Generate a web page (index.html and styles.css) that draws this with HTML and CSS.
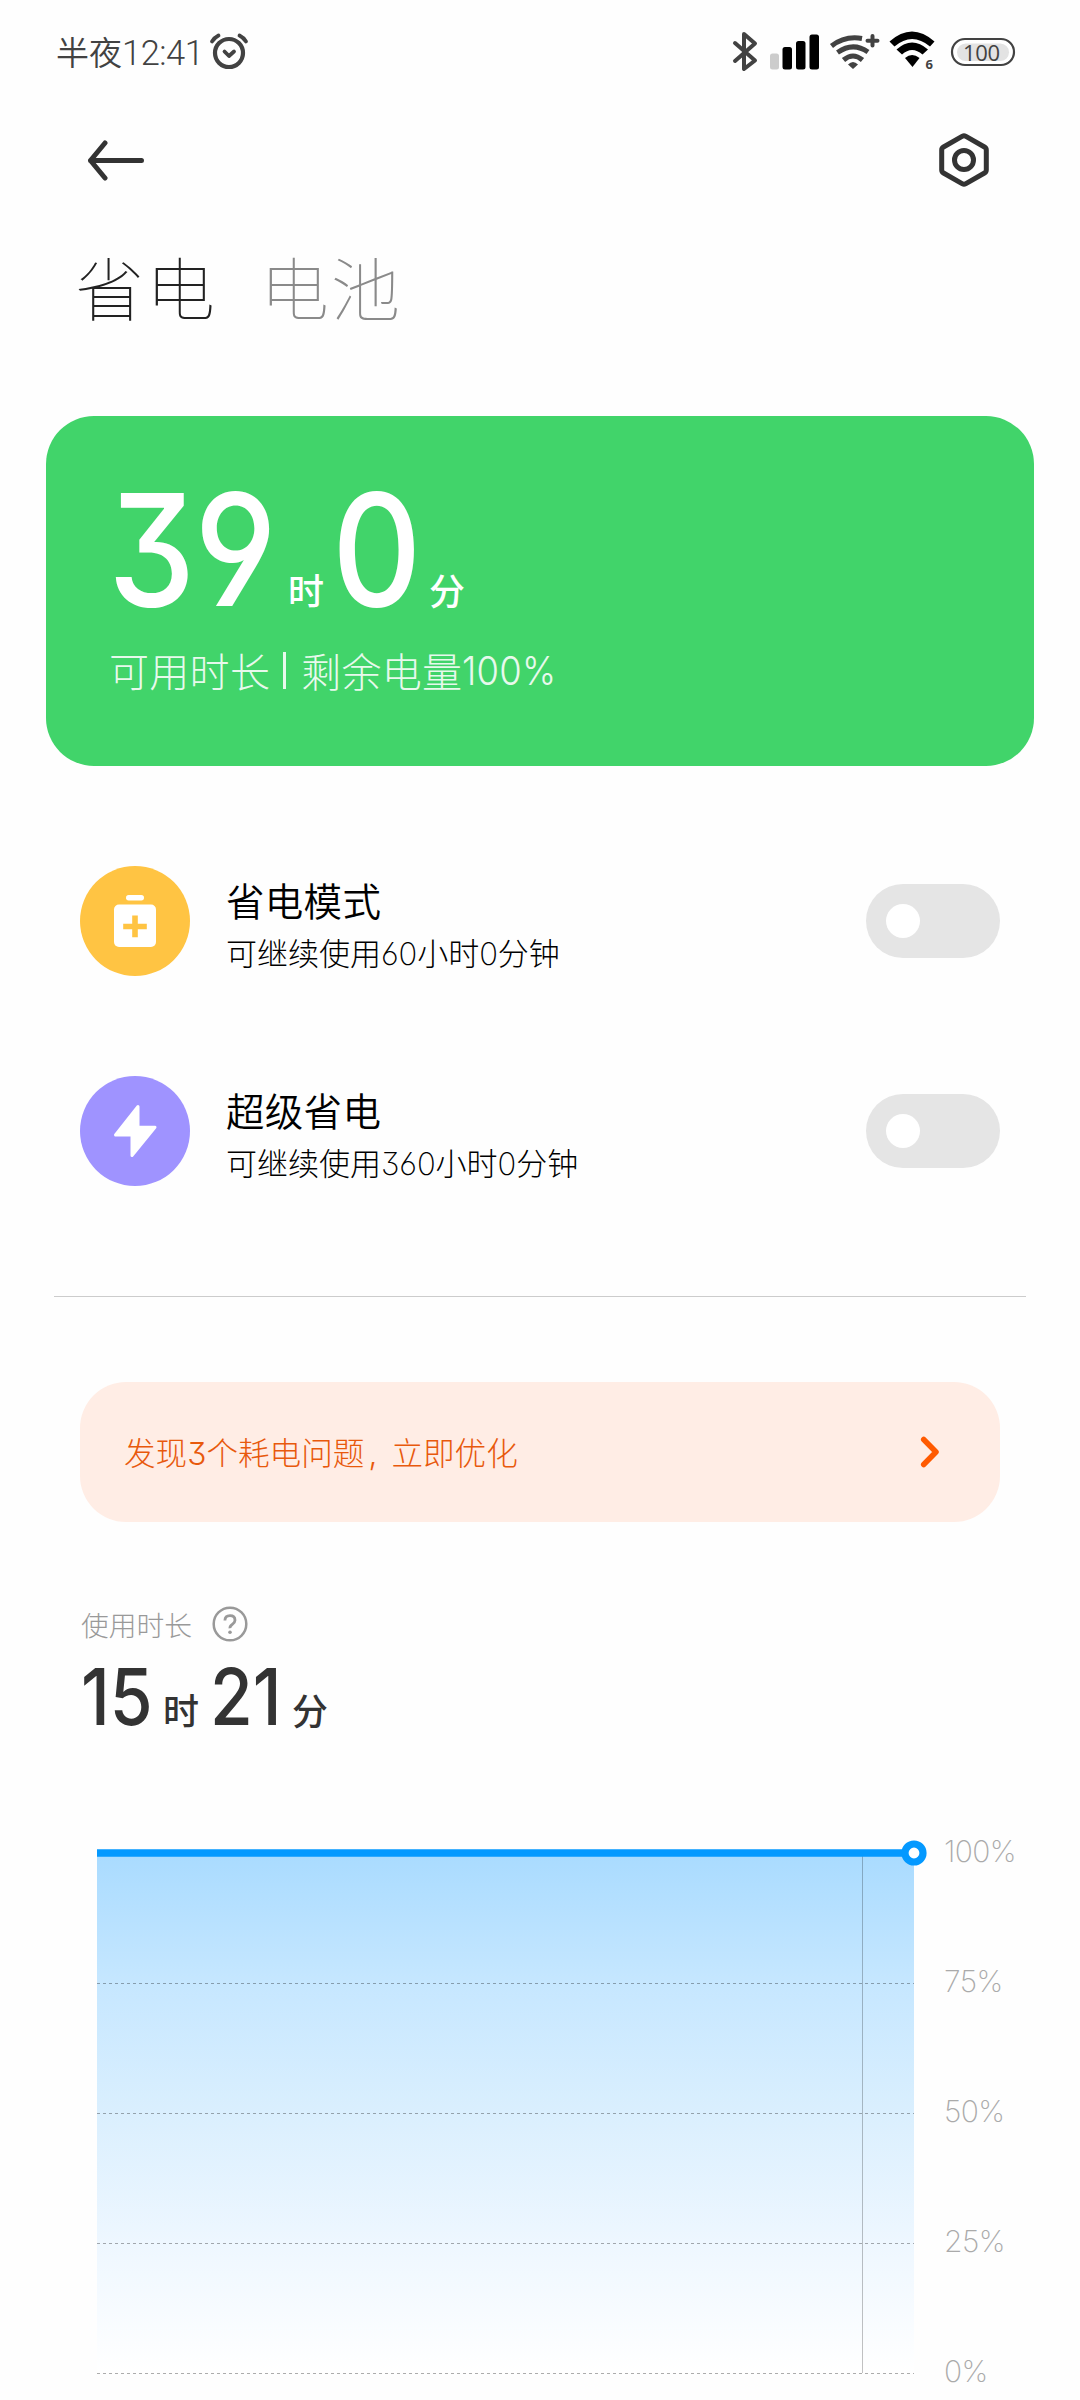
FILE: index.html
```html
<!DOCTYPE html>
<html lang="zh-CN">
<head>
<meta charset="utf-8">
<title>省电与电池</title>
<link rel="stylesheet" href="styles.css">
</head>
<body>
<header class="status">
  <div class="clock"><span class="clock-cn">半夜</span><span class="clock-num">12:41</span></div>
  <svg class="alarm" width="40" height="40" viewBox="0 0 40 40" fill="none" stroke="#424242" stroke-linecap="round" stroke-linejoin="round">
    <circle cx="20" cy="21" r="14" stroke-width="4.200"/>
    <path d="M15.500 19.500 20 24l5-4.500" stroke-width="3.800"/>
    <path d="M3 9.500Q5.500 5.500 9.500 3.500M37 9.500Q34.500 5.500 30.500 3.500" stroke-width="3.800"/>
  </svg>
  <svg class="status-icons" width="290" height="44" viewBox="730 30 290 44" fill="none">
    <path d="M735 43 755 60.500 744 69V34l11 9.500L735 61" stroke="#424242" stroke-width="4" stroke-linecap="round" stroke-linejoin="round"/>
    <rect x="770" y="53.500" width="9" height="16" rx="2.500" fill="#ccc"/>
    <rect x="782.500" y="47" width="9.500" height="22.500" rx="2.500" fill="#000"/>
    <rect x="796" y="41" width="9.500" height="28.500" rx="2.500" fill="#000"/>
    <rect x="809.500" y="34.500" width="9.500" height="35" rx="2.500" fill="#000"/>
    <g stroke="#424242" stroke-width="5">
      <path d="M831.500 46Q845 35.500 862 38.500"/>
      <path d="M837.500 52.500Q853 41.500 868 52"/>
      <path d="M843.500 60Q853 52 862.500 60"/>
      <path d="M872.500 36v9.500M867.500 40.800h10" stroke-width="4" stroke-linecap="round"/>
    </g>
    <path d="M848 64.500Q853 59.500 858 64.500L853 69Z" fill="#424242"/>
    <path d="M889.500 41.500Q912 21.500 934.500 41.500L930 46.500Q912 31.500 894.500 46.500Z" fill="#000"/>
    <path d="M896.500 49.500Q912 35.500 928 49.500L922.500 54.500Q912 45.500 902 54.500Z" fill="#000"/>
    <path d="M905 58Q912 52 919.500 58L912.500 67Z" fill="#000"/>
    <text class="six" x="925.500" y="69">6</text>
    <rect x="952" y="39" width="62" height="26" rx="13" fill="#fff" stroke="#424242" stroke-width="2.200"/>
    <rect x="957" y="43.500" width="52" height="17.500" rx="8.700" fill="#e3e3e3"/>
    <text class="level" x="963" y="61" textLength="37">100</text>
  </svg>
</header>

<nav class="bar">
  <svg width="58" height="42" viewBox="0 0 58 42" fill="none" stroke="#333" stroke-width="5" stroke-linecap="round" stroke-linejoin="round">
    <path d="M54.500 21.500H3.500M18 4 3.500 21.500 18 39"/>
  </svg>
  <svg width="52" height="56" viewBox="0 0 52 56" fill="none" stroke="#333" stroke-width="5" stroke-linejoin="round">
    <path d="M24.500 4.200Q26 3.400 27.500 4.200L46.500 15Q48.300 16 48.300 18V38Q48.300 40 46.500 41L27.500 51.800Q26 52.600 24.500 51.800L5.500 41Q3.700 40 3.700 38V18Q3.700 16 5.500 15Z"/>
    <circle cx="26" cy="28" r="9.500"/>
  </svg>
</nav>

<div class="tabs"><span class="tab tab-on">省电</span><span class="tab">电池</span></div>

<section class="card">
  <div class="time">
    <span class="num num-39">39</span><span class="unit unit-h">时</span><span class="num num-0">0</span><span class="unit">分</span>
  </div>
  <div class="card-sub"><span>可用时长</span><i class="pipe"></i><span>剩余电量</span><span class="pct">100%</span></div>
</section>

<section class="mode">
  <svg width="110" height="110" viewBox="0 0 110 110">
    <circle cx="55" cy="55" r="55" fill="#ffc443"/>
    <rect x="46" y="29" width="18" height="5.500" rx="2.700" fill="#fff"/>
    <rect x="34" y="38.500" width="42" height="42.500" rx="5" fill="#fff"/>
    <path d="M52.200 49.500h5.600v8.200h9v5.600h-9v8h-5.600v-8h-9v-5.600h9z" fill="#ffc443"/>
  </svg>
  <div class="mode-text">
    <div class="mode-title">省电模式</div>
    <div class="mode-sub">可继续使用<b>60</b>小时<b>0</b>分钟</div>
  </div>
  <div class="switch"></div>
</section>
<section class="mode">
  <svg width="110" height="110" viewBox="0 0 110 110">
    <circle cx="55" cy="55" r="55" fill="#9f93ff"/>
    <path d="M58 30.500 35.500 59H52V79.500L75 51.200H58Z" fill="#fff" stroke="#fff" stroke-width="3" stroke-linejoin="round"/>
  </svg>
  <div class="mode-text">
    <div class="mode-title">超级省电</div>
    <div class="mode-sub">可继续使用<b>360</b>小时<b>0</b>分钟</div>
  </div>
  <div class="switch"></div>
</section>

<hr class="rule">

<section class="notice">
  <span class="notice-text">发现<b>3</b>个耗电问题<span class="comma">,</span>立即优化</span>
  <svg width="20" height="32" viewBox="0 0 20 32" fill="none" stroke="#ff5a00" stroke-width="5.500" stroke-linecap="round" stroke-linejoin="round"><path d="M3.700 3.500 16 16 3.700 28.500"/></svg>
</section>

<section class="usage">
  <div class="usage-label"><span>使用时长</span>
    <svg width="36" height="36" viewBox="0 0 36 36" fill="none" stroke="#999" stroke-width="2.500">
      <circle cx="18" cy="18" r="16.300"/>
      <path d="M12.900 14.500Q13 9.700 18 9.700T23 14.200Q23 16.300 20.300 18.300T18 22.300" stroke-width="2.800"/>
      <circle cx="18" cy="26.300" r="1.800" fill="#999" stroke="none"/>
    </svg>
  </div>
  <div class="used"><span class="used-num">15</span><span class="used-unit">时</span><span class="used-num">21</span><span class="used-unit">分</span></div>
</section>

<section class="chart">
  <svg width="840" height="560" viewBox="90 1836 840 560" fill="none">
    <defs>
      <linearGradient id="fill" x1="0" y1="0" x2="0" y2="1">
        <stop offset="0" stop-color="#a9dbff"/>
        <stop offset=".25" stop-color="#c6e7ff"/>
        <stop offset=".5" stop-color="#daeffe"/>
        <stop offset=".75" stop-color="#eef7ff"/>
        <stop offset="1" stop-color="#fff"/>
      </linearGradient>
    </defs>
    <rect x="97" y="1853" width="817" height="520" fill="url(#fill)"/>
    <path d="M862.500 1856V2373" stroke="#000" stroke-opacity=".24"/>
    <path d="M97 1983.500H914M97 2113.500H914M97 2243.500H914M97 2373.500H914" stroke="#000" stroke-opacity=".32" stroke-dasharray="3 3"/>
    <path d="M97 1853H914" stroke="#0499ff" stroke-width="7.500"/>
    <circle cx="914" cy="1853" r="9" fill="#fff" stroke="#0499ff" stroke-width="7.200"/>
  </svg>
  <div class="scale"><span>100%</span><span>75%</span><span>50%</span><span>25%</span><span>0%</span></div>
</section>
</body>
</html>
```
FILE: styles.css
```css
* { box-sizing: border-box; }
body {
  margin: 0;
  width: 1080px;
  height: 2400px;
  overflow: hidden;
  background: #fefefe;
  color: #000;
  font-family: Inter, "Noto Sans CJK SC", sans-serif;
  font-feature-settings: "cv09", "ss01";
  font-weight: 300;
}
svg { display: block; flex: none; }
b { font-weight: inherit; }

.status { display: flex; height: 84px; padding: 31px 0 0 56px; color: #424242; }
.clock { display: flex; width: 153px; height: 44px; line-height: 44px; white-space: nowrap; }
.clock-cn { width: 66px; font-size: 33px; font-weight: 350; }
.clock-num { font-size: 34.500px; font-family: Roboto, sans-serif; font-weight: 350; letter-spacing: -.5px; }
.alarm { margin-top: 1px; }
.status-icons { margin: -1px 0 0 481px; }
.six { font: 700 13px "Open Sans", sans-serif; fill: #424242; }
.level { font: 400 22px "Open Sans", sans-serif; fill: #424242; }

.bar { display: flex; justify-content: space-between; align-items: center; height: 56px; margin: 48px 90px 0 87px; }

.tabs { display: flex; gap: 45px; height: 100px; margin: 53px 0 0 75px; line-height: 100px; }
.tab { width: 140px; font-size: 69px; font-weight: 100; letter-spacing: 2px; color: #8a8a8a; white-space: nowrap; }
.tab-on { color: #222; }

.card { height: 350px; margin: 75px 46px 0; padding: 59px 0 0 66px; border-radius: 48px; background: #41d46a; color: #fff; }
.time { display: flex; height: 150px; line-height: 150px; white-space: nowrap; }
.num { font-size: 156px; font-weight: 470; transform: scaleX(.89); transform-origin: 0 50%; letter-spacing: -1px; }
.num-39 { width: 176px; margin-left: -4px; }
.num-0 { width: 97px; margin-left: -5px; }
.unit { font-size: 36px; font-weight: 500; padding-top: 42px; width: 49px; }
.unit-h { margin-left: 4px; }
.card-sub { display: flex; align-items: center; margin: 15px 0 0 -3px; height: 60px; font-size: 40px; font-weight: 300; letter-spacing: .3px; opacity: .88; white-space: nowrap; }
.pipe { width: 3px; height: 37px; margin: 0 15px 0 13px; background: #fff; }
.pct { transform: scaleX(.91); transform-origin: 0 50%; }

.mode { display: flex; align-items: center; height: 110px; margin: 100px 80px 0; }
.mode-text { flex: 1; padding: 10px 0 0 36px; white-space: nowrap; }
.mode-title { height: 56px; line-height: 56px; font-size: 38.500px; font-weight: 350; letter-spacing: .3px; }
.mode-sub { height: 48px; line-height: 48px; font-size: 31px; font-weight: 250; }
.mode-sub b { letter-spacing: -.1px; }
.switch { display: flex; align-items: center; width: 134px; height: 74px; padding-left: 20px; border-radius: 37px; background: #e5e5e5; }
.switch::before { content: ""; width: 34px; height: 34px; border-radius: 50%; background: #fff; }

.rule { height: 1px; margin: 110px 54px 0; border: 0; background: #ccc; }

.notice { display: flex; justify-content: space-between; align-items: center; height: 140px; margin: 85px 80px 0; padding: 0 60px 0 44px; border-radius: 46px; background: #ffede5; color: #e8590c; }
.notice-text { margin-top: -3px; font-size: 31.600px; white-space: nowrap; }
.comma { display: inline-block; width: 27px; padding-left: 4px; }

.usage { height: 210px; margin: 80px 0 0 81px; }
.usage-label { display: flex; align-items: center; gap: 20px; height: 44px; font-size: 27.750px; color: #999; }
.used { display: flex; height: 90px; margin-top: 6px; line-height: 90px; color: #333; white-space: nowrap; }
.used-num { width: 82px; font-size: 78px; font-weight: 500; transform: scaleX(.89); transform-origin: 0 50%; }
.used-unit { width: 47px; padding-top: 15px; font-size: 36px; font-weight: 500; }

.chart { display: flex; margin: 24px 0 0 90px; }
.scale { display: flex; flex-direction: column; gap: 90px; padding-left: 14px; margin-top: -5px; font-size: 30px; letter-spacing: -.6px; line-height: 40px; font-weight: 200; color: #aaa; }
```
